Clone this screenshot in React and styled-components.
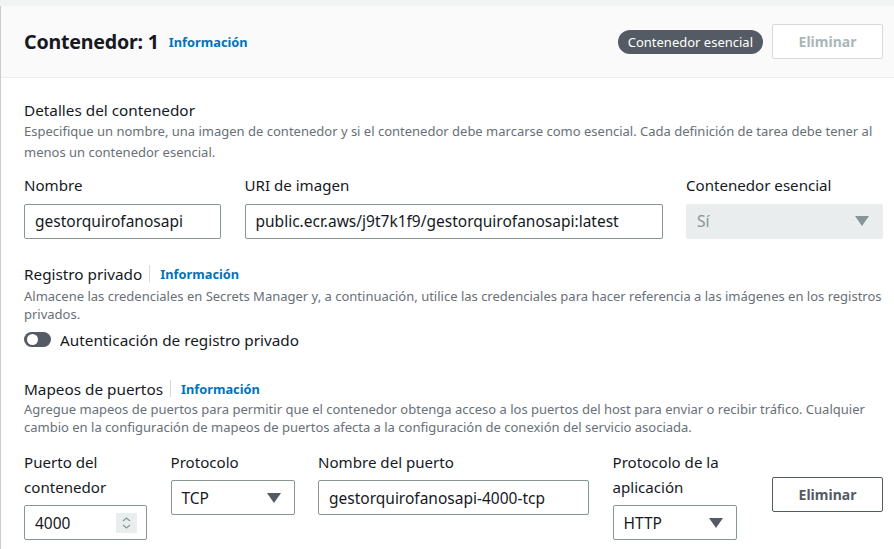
import React from "react";
import styled, { createGlobalStyle } from "styled-components";

const Global = createGlobalStyle`
  html, body { margin: 0; padding: 0; }
  body {
    background: #f2f3f3;
    font-family: "Noto Sans", "Open Sans", Arial, sans-serif;
    color: #16191f;
    overflow: hidden;
  }
  * { box-sizing: border-box; }
`;

const Page = styled.div`
  padding-top: 6px;
  width: 894px;
  height: 549px;
  overflow: hidden;
`;

const Card = styled.section`
  background: #fff;
  border-left: 1px solid #c6cccf;
  box-shadow: 0 1px 1px rgba(0, 28, 36, 0.3);
  min-height: 560px;
`;

const Header = styled.header`
  display: flex;
  align-items: center;
  height: 72px;
  padding: 0 11px 0 23px;
  background: #fafafa;
  border-bottom: 1px solid #eaeded;
`;

const Title = styled.h2`
  margin: 0;
  font-size: 19.6px;
  font-weight: 700;
  letter-spacing: -0.2px;
`;

const InfoLink = styled.a`
  color: #0073bb;
  font-weight: 700;
  font-size: 12.8px;
  text-decoration: none;
  margin-left: ${(p) => p.$gap || 10}px;
`;

const Spacer = styled.div`
  flex: 1;
`;

const Badge = styled.span`
  display: inline-flex;
  align-items: center;
  height: 24px;
  padding: 0 10px;
  border-radius: 12px;
  background: #545b64;
  color: #fff;
  font-size: 13px;
  margin-right: 9px;
`;

const Button = styled.button`
  width: 111px;
  height: 35px;
  border-radius: 2px;
  background: #fff;
  font-family: inherit;
  font-size: 14px;
  font-weight: 700;
  border: 1px solid ${(p) => (p.disabled ? "#d5dbdb" : "#545b64")};
  color: ${(p) => (p.disabled ? "#aab7b8" : "#545b64")};
  cursor: ${(p) => (p.disabled ? "default" : "pointer")};
`;

const Body = styled.div`
  padding: 21px 10px 0 23px;
`;

const Section = styled.div`
  margin-bottom: ${(p) => p.$mb || 0}px;
`;

const SectionTitle = styled.div`
  display: flex;
  align-items: center;
  font-size: 15.3px;
  line-height: 22px;
`;

const Divider = styled.span`
  width: 1px;
  height: 17px;
  background: #d5dbdb;
  margin-left: 7px;
`;

const Desc = styled.p`
  margin: ${(p) => p.$mt || 0}px 0 0;
  font-size: 13px;
  line-height: ${(p) => p.$lh || 18}px;
  color: #687078;
`;

const FieldsRow = styled.div`
  display: grid;
  grid-template-columns: ${(p) => p.$cols};
  column-gap: 23.5px;
  align-items: start;
  margin-top: ${(p) => p.$mt || 0}px;
`;

const Field = styled.div`
  display: flex;
  flex-direction: column;
`;

const Label = styled.label`
  font-size: 15.1px;
  line-height: 25px;
  margin-bottom: 5.5px;
`;

const Input = styled.div`
  display: flex;
  align-items: center;
  height: 35px;
  padding: 0 9px 0 10px;
  border: 1px solid #879596;
  border-radius: 2px;
  background: #fff;
  font-size: 15.5px;
  color: #16191f;
  white-space: nowrap;
`;

const Select = styled(Input)`
  justify-content: space-between;
  padding-right: 13px;
  background: ${(p) => (p.$disabled ? "#eaeded" : "#fff")};
  border-color: ${(p) => (p.$disabled ? "#eaeded" : "#879596")};
  color: ${(p) => (p.$disabled ? "#879596" : "#16191f")};
`;

const Caret = styled.span`
  width: 0;
  height: 0;
  border-left: 7px solid transparent;
  border-right: 7px solid transparent;
  border-top: 10px solid ${(p) => (p.$disabled ? "#879596" : "#545b64")};
`;

const Spin = styled.span`
  display: flex;
  align-items: center;
  justify-content: center;
  width: 21px;
  height: 20px;
  background: #eaeded;
  margin-left: auto;
`;

const ToggleRow = styled.div`
  display: flex;
  align-items: center;
  gap: 9px;
  margin-top: 6px;
  font-size: 15.3px;
  line-height: 22px;
`;

const Toggle = styled.span`
  position: relative;
  width: 27px;
  height: 15px;
  border-radius: 8px;
  background: #545b64;
  &::after {
    content: "";
    position: absolute;
    left: 3px;
    top: 2px;
    width: 11px;
    height: 11px;
    border-radius: 50%;
    background: #fff;
  }
`;

const ButtonCell = styled.div`
  margin-left: 12px;
  align-self: center;
  margin-top: -1px;
`;

export default function App() {
  return (
    <>
      <Global />
      <Page>
        <Card>
          <Header>
            <Title>Contenedor: 1</Title>
            <InfoLink href="#">Información</InfoLink>
            <Spacer />
            <Badge>Contenedor esencial</Badge>
            <Button disabled>Eliminar</Button>
          </Header>
          <Body>
            <Section $mb={24}>
              <SectionTitle>Detalles del contenedor</SectionTitle>
              <Desc $mt={0} $lh={21}>
                Especifique un nombre, una imagen de contenedor y si el contenedor debe marcarse
                como esencial. Cada definición de tarea debe tener al menos un contenedor esencial.
              </Desc>
              <FieldsRow $cols="197px 418px 197px" $mt={10}>
                <Field>
                  <Label>Nombre</Label>
                  <Input>gestorquirofanosapi</Input>
                </Field>
                <Field>
                  <Label>URI de imagen</Label>
                  <Input>public.ecr.aws/j9t7k1f9/gestorquirofanosapi:latest</Input>
                </Field>
                <Field>
                  <Label>Contenedor esencial</Label>
                  <Select $disabled>
                    Sí
                    <Caret $disabled />
                  </Select>
                </Field>
              </FieldsRow>
            </Section>
            <Section $mb={27}>
              <SectionTitle>
                Registro privado
                <Divider />
                <InfoLink href="#" $gap={10}>Información</InfoLink>
              </SectionTitle>
              <Desc $mt={2}>
                Almacene las credenciales en Secrets Manager y, a continuación, utilice las
                credenciales para hacer referencia a las imágenes en los registros privados.
              </Desc>
              <ToggleRow>
                <Toggle />
                Autenticación de registro privado
              </ToggleRow>
            </Section>
            <Section>
              <SectionTitle>
                Mapeos de puertos
                <Divider />
                <InfoLink href="#" $gap={10}>Información</InfoLink>
              </SectionTitle>
              <Desc $mt={0}>
                Agregue mapeos de puertos para permitir que el contenedor obtenga acceso a los
                puertos del host para enviar o recibir tráfico. Cualquier cambio en la
                configuración de mapeos de puertos afecta a la configuración de conexión del
                servicio asociada.
              </Desc>
              <FieldsRow $cols="123px 124px 271px 124px auto" $mt={14}>
                <Field>
                  <Label>Puerto del contenedor</Label>
                  <Input>
                    4000
                    <Spin>
                      <svg width="11" height="14" viewBox="0 0 11 14">
                        <path d="M2 5 L5.5 2 L9 5 M2 9 L5.5 12 L9 9" fill="none" stroke="#879596" strokeWidth="1.2" />
                      </svg>
                    </Spin>
                  </Input>
                </Field>
                <Field>
                  <Label>Protocolo</Label>
                  <Select>
                    TCP
                    <Caret />
                  </Select>
                </Field>
                <Field>
                  <Label>Nombre del puerto</Label>
                  <Input>gestorquirofanosapi-4000-tcp</Input>
                </Field>
                <Field>
                  <Label>Protocolo de la aplicación</Label>
                  <Select>
                    HTTP
                    <Caret />
                  </Select>
                </Field>
                <ButtonCell>
                  <Button>Eliminar</Button>
                </ButtonCell>
              </FieldsRow>
            </Section>
          </Body>
        </Card>
      </Page>
    </>
  );
}
